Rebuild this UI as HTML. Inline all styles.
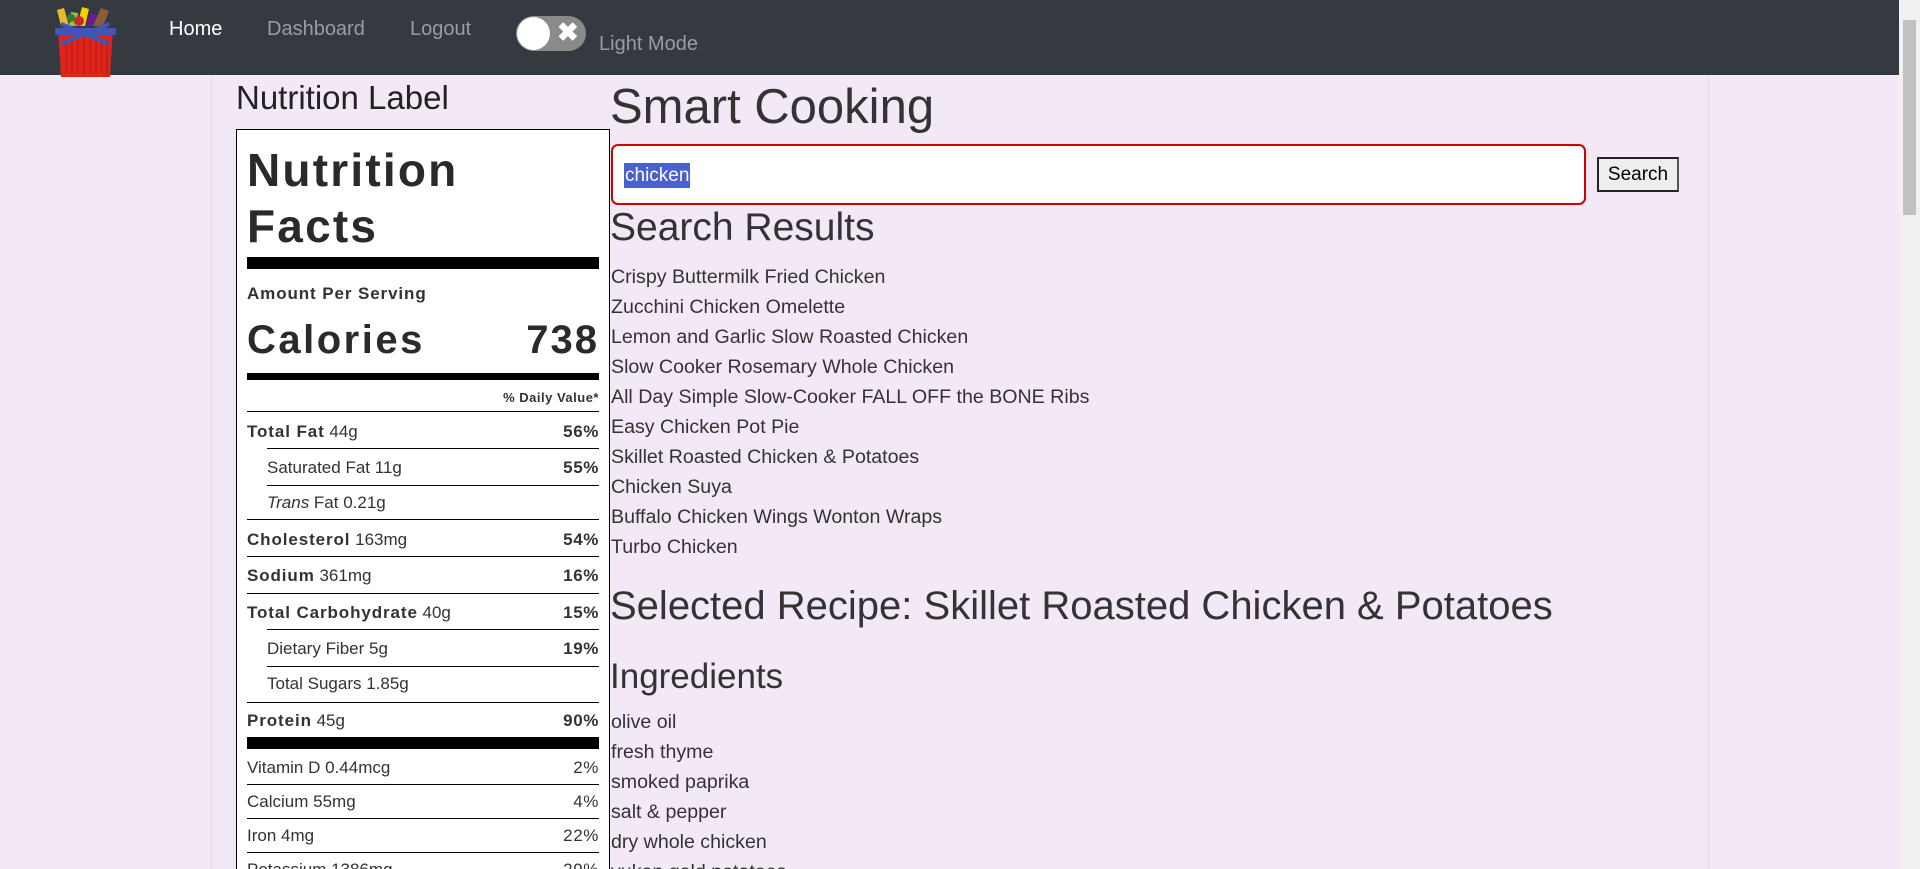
<!DOCTYPE html>
<html><head><meta charset="utf-8"><style>
*{box-sizing:border-box;margin:0;padding:0}
html{width:1920px;height:869px;overflow:hidden}
body{width:1920px;height:869px;overflow:hidden;background:#f3e8f5;font-family:"Liberation Sans",Arial,sans-serif;color:#333;position:relative}
.nav{position:absolute;left:0;top:0;width:1899px;height:75px;background:#343a40}
.nav a{position:absolute;top:18px;font-size:20px;color:#9a9da0;text-decoration:none}
.sb{position:absolute;left:1899px;top:0;width:21px;height:869px;background:#f1f1f1}
.sb div{position:absolute;left:4px;top:20px;width:13px;height:195px;background:#c1c1c1}
.vl{position:absolute;top:75px;width:1px;height:794px;background:#ddd}
.abs{position:absolute;white-space:nowrap}
.box{position:absolute;left:236px;top:129px;width:374px;height:760px;border:1px solid #000;background:#fff}
.r{position:absolute;font-size:17px;line-height:20px;white-space:nowrap}
.r b{font-weight:bold;letter-spacing:0.9px}
.p{position:absolute;right:10px;font-size:17px;line-height:20px;font-weight:bold;letter-spacing:0.6px}
.ln{position:absolute;height:1px;background:#000;right:10px}
.li{position:absolute;left:611px;font-size:19.6px;line-height:30px;color:#333}
</style></head><body>
<div class="nav">
 <svg style="position:absolute;left:49px;top:4px" width="73" height="74" viewBox="0 0 73 74">
  <path d="M12 22 L8 6 L15 4 L20 22Z" fill="#e8b830"/>
  <path d="M20 22 L22 8 L29 9 L28 22Z" fill="#8bc34a"/>
  <path d="M28 22 L33 3 L40 5 L36 22Z" fill="#f5d000"/>
  <path d="M36 22 L42 9 L48 11 L44 22Z" fill="#6a1b9a"/>
  <path d="M44 22 L52 4 L60 7 L54 22Z" fill="#8d5a3a"/>
  <circle cx="30" cy="17" r="5" fill="#c62828"/>
  <circle cx="22" cy="14" r="4" fill="#2e7d32"/>
  <path d="M9 24 H64 L61 73 H12Z" fill="#e2231a"/>
  <g stroke="#b71c1c" stroke-width="1.5"><path d="M17 34V70M23 34V70M29 34V70M35 34V70M41 34V70M47 34V70M53 34V70M58 34V70"/></g>
  <rect x="6" y="24" width="61" height="7" fill="#4055b5"/>
  <path d="M12 20 L60 40 M60 20 L12 40" stroke="#4055b5" stroke-width="4"/>
 </svg>
 <a style="left:169px;color:#fff">Home</a>
 <a style="left:267px">Dashboard</a>
 <a style="left:410px">Logout</a>
 <div style="position:absolute;left:516px;top:16px;width:70px;height:35px;border-radius:18px;background:#8a8a8a"></div>
 <div style="position:absolute;left:517px;top:17px;width:33px;height:33px;border-radius:50%;background:#fff"></div>
 <div class="abs" style="left:557px;top:17px;font-size:26px;font-weight:bold;color:#fff">✖</div>
 <a style="left:599px;top:33px">Light Mode</a>
</div>
<div class="sb"><div></div></div>
<div class="vl" style="left:211px"></div>
<div class="vl" style="left:1708px"></div>
<div class="abs" style="left:236px;top:79px;font-size:33px;color:#222">Nutrition Label</div>
<div class="box">
 <div class="r" style="left:10px;top:12px;font-size:46px;line-height:56px;font-weight:900;letter-spacing:2.2px;color:#2a2a2a">Nutrition<br>Facts</div>
 <div class="ln" style="left:10px;top:127px;height:12px"></div>
 <div class="r" style="left:10px;top:154px"><b>Amount Per Serving</b></div>
 <div class="r" style="left:10px;top:186px;font-size:40px;line-height:48px;font-weight:900;letter-spacing:2.5px;color:#2a2a2a">Calories</div>
 <div class="r" style="right:10px;top:186px;font-size:40px;line-height:48px;font-weight:900;letter-spacing:2px;color:#2a2a2a">738</div>
 <div class="ln" style="left:10px;top:243px;height:7px"></div>
 <div class="r" style="right:10px;top:258px;font-size:13px;font-weight:bold;letter-spacing:0.5px">% Daily Value*</div>
 <div class="ln" style="left:10px;top:281px"></div>
 <div class="r" style="left:10px;top:292px"><b>Total Fat</b> 44g</div><div class="p" style="top:292px">56%</div>
 <div class="ln" style="left:30px;top:318px"></div>
 <div class="r" style="left:30px;top:328px">Saturated Fat 11g</div><div class="p" style="top:328px">55%</div>
 <div class="ln" style="left:30px;top:355px"></div>
 <div class="r" style="left:30px;top:363px"><i>Trans</i> Fat 0.21g</div>
 <div class="ln" style="left:10px;top:389px"></div>
 <div class="r" style="left:10px;top:400px"><b>Cholesterol</b> 163mg</div><div class="p" style="top:400px">54%</div>
 <div class="ln" style="left:10px;top:426px"></div>
 <div class="r" style="left:10px;top:436px"><b>Sodium</b> 361mg</div><div class="p" style="top:436px">16%</div>
 <div class="ln" style="left:10px;top:463px"></div>
 <div class="r" style="left:10px;top:473px"><b>Total Carbohydrate</b> 40g</div><div class="p" style="top:473px">15%</div>
 <div class="ln" style="left:30px;top:499px"></div>
 <div class="r" style="left:30px;top:509px">Dietary Fiber 5g</div><div class="p" style="top:509px">19%</div>
 <div class="ln" style="left:30px;top:536px"></div>
 <div class="r" style="left:30px;top:544px">Total Sugars 1.85g</div>
 <div class="ln" style="left:10px;top:572px"></div>
 <div class="r" style="left:10px;top:581px"><b>Protein</b> 45g</div><div class="p" style="top:581px">90%</div>
 <div class="ln" style="left:10px;top:607px;height:12px"></div>
 <div class="r" style="left:10px;top:628px">Vitamin D 0.44mcg</div><div class="p" style="top:628px;font-weight:normal">2%</div>
 <div class="ln" style="left:10px;top:654px"></div>
 <div class="r" style="left:10px;top:662px">Calcium 55mg</div><div class="p" style="top:662px;font-weight:normal">4%</div>
 <div class="ln" style="left:10px;top:688px"></div>
 <div class="r" style="left:10px;top:696px">Iron 4mg</div><div class="p" style="top:696px;font-weight:normal">22%</div>
 <div class="ln" style="left:10px;top:722px"></div>
 <div class="r" style="left:10px;top:730px">Potassium 1386mg</div><div class="p" style="top:730px;font-weight:normal">29%</div>
</div>
<div class="abs" style="left:610px;top:79px;font-size:49px;line-height:56px;color:#333">Smart Cooking</div>
<div style="position:absolute;left:611px;top:144px;width:975px;height:61px;border:2px solid #d40000;border-radius:7px;background:#fff"></div>
<div class="abs" style="left:624px;top:163px;height:25px;padding:0 1px;background:#4a5fd0;color:#fff;font-size:19px;line-height:25px">chicken</div>
<div class="abs" style="left:1597px;top:157px;width:82px;height:35px;border:2px solid #222;border-right-color:#555;background:#eee;font-size:19px;line-height:31px;text-align:center;color:#000">Search</div>
<div class="abs" style="left:610px;top:205px;font-size:39px;line-height:46px">Search Results</div>
<div class="li" style="top:262px">Crispy Buttermilk Fried Chicken</div>
<div class="li" style="top:292px">Zucchini Chicken Omelette</div>
<div class="li" style="top:322px">Lemon and Garlic Slow Roasted Chicken</div>
<div class="li" style="top:352px">Slow Cooker Rosemary Whole Chicken</div>
<div class="li" style="top:382px">All Day Simple Slow-Cooker FALL OFF the BONE Ribs</div>
<div class="li" style="top:412px">Easy Chicken Pot Pie</div>
<div class="li" style="top:442px">Skillet Roasted Chicken &amp; Potatoes</div>
<div class="li" style="top:472px">Chicken Suya</div>
<div class="li" style="top:502px">Buffalo Chicken Wings Wonton Wraps</div>
<div class="li" style="top:532px">Turbo Chicken</div>
<div class="abs" style="left:610px;top:583px;font-size:40px;line-height:46px">Selected Recipe: Skillet Roasted Chicken &amp; Potatoes</div>
<div class="abs" style="left:610px;top:656px;font-size:35px;line-height:42px">Ingredients</div>
<div class="li" style="top:707px">olive oil</div>
<div class="li" style="top:737px">fresh thyme</div>
<div class="li" style="top:767px">smoked paprika</div>
<div class="li" style="top:797px">salt &amp; pepper</div>
<div class="li" style="top:827px">dry whole chicken</div>
<div class="li" style="top:857px">yukon gold potatoes</div>
</body></html>
